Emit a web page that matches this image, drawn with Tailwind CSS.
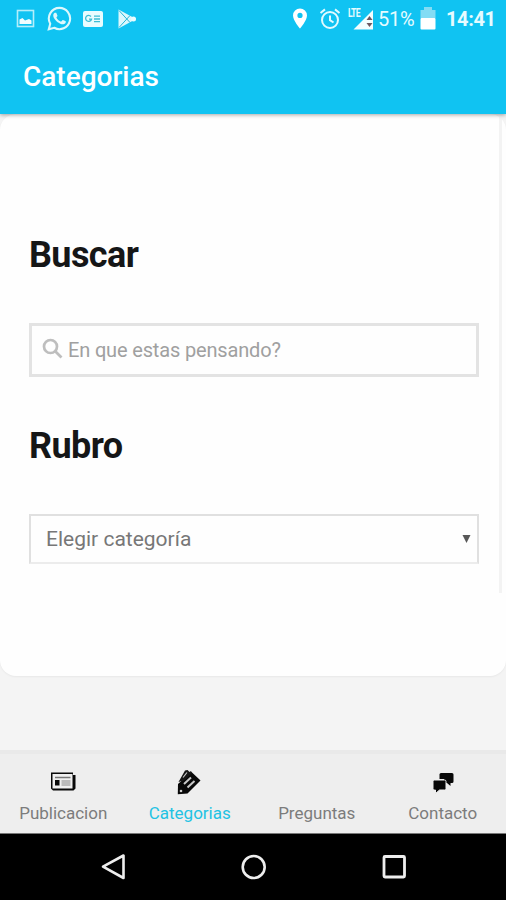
<!DOCTYPE html>
<html lang="es">
<head>
<meta charset="utf-8">
<title>Categorias</title>
<script src="https://cdn.jsdelivr.net/npm/@tailwindcss/browser@4"></script>
</head>
<body class="w-[506px] h-[900px] overflow-hidden bg-[#f4f4f4] font-['Roboto',sans-serif]">
<div class="flex flex-col h-[900px]">
  <header class="relative z-10 h-[114px] shrink-0 bg-[#10c3f2] text-white shadow-[0_1px_4px_rgba(0,0,0,0.35)]">
    <div class="flex h-[37px] items-center justify-between pl-[16px] pr-[11px] text-[#e6fbff]">
      <div class="flex items-center">
        <svg class="w-[19px] h-[19px]" viewBox="0 0 19 19"><rect x="1.500" y="1.500" width="16" height="16" fill="none" stroke="#b5eefa" stroke-width="1.600"/><path d="M3.500 10.500L6.500 9L9 11.500L13 10L15.500 11.500V15H3.500Z" fill="#f2fdff"/></svg>
        <svg class="ml-[12px] w-[25px] h-[25px]" viewBox="0 0 24 24" fill="#ddf8fd"><path d="M17.472 14.382c-.297-.149-1.758-.867-2.030-.967-.273-.099-.471-.148-.670.150-.197.297-.767.966-.940 1.164-.173.199-.347.223-.644.075-.297-.150-1.255-.463-2.390-1.475-.883-.788-1.480-1.761-1.653-2.059-.173-.297-.018-.458.130-.606.134-.133.298-.347.446-.520.149-.174.198-.298.298-.497.099-.198.050-.371-.025-.520-.075-.149-.669-1.612-.916-2.207-.242-.579-.487-.500-.669-.510-.173-.008-.371-.010-.570-.010-.198 0-.520.074-.792.372-.272.297-1.040 1.016-1.040 2.479 0 1.462 1.065 2.875 1.213 3.074.149.198 2.096 3.200 5.077 4.487.709.306 1.262.489 1.694.625.712.227 1.360.195 1.871.118.571-.085 1.758-.719 2.006-1.413.248-.694.248-1.289.173-1.413-.074-.124-.272-.198-.570-.347z"/><path d="M12 1.800a10.200 10.200 0 0 0-8.900 15.200L1.700 22.300L7 20.900A10.200 10.200 0 1 0 12 1.800Z" fill="none" stroke="#ddf8fd" stroke-width="2"/></svg>
        <svg class="ml-[10px] w-[22px] h-[18px]" viewBox="0 0 22 18"><rect x="1" y="1" width="20" height="16" rx="2" fill="#e9fcff"/><path d="M9 6.500A3 3 0 1 0 9.500 9.200H7M12 6.200h6M12 9h6M12 11.700h6" fill="none" stroke="#3dbcd4" stroke-width="1.300"/></svg>
        <svg class="ml-[13px] w-[21px] h-[20px]" viewBox="0 0 21 20"><path d="M1.500 .5L19 10L1.500 19.500Z" fill="#dcf8fd"/><path d="M2 1.500L13 13.500M2 18.500L13 6.500" stroke="#25b6d8" stroke-width="1"/><circle cx="16.500" cy="10" r="2.500" fill="#eafcff"/></svg>
      </div>
      <div class="flex items-center">
        <svg class="w-[16px] h-[21px]" viewBox="0 0 16 21"><path fill="#fff" fill-rule="evenodd" d="M8 .5A7 7 0 0 0 1 7.500C1 12.500 8 20.500 8 20.500S15 12.500 15 7.500A7 7 0 0 0 8 .500ZM8 4.800a2.600 2.600 0 1 1 0 5.200a2.600 2.600 0 0 1 0-5.200Z"/></svg>
        <svg class="ml-[11px] w-[22px] h-[22px]" viewBox="0 0 22 22" fill="none" stroke="#e2faff" stroke-width="2"><circle cx="11" cy="12" r="8"/><path d="M1.500 5L6 1.400M20.500 5L16 1.400M11 7.500V12.200L14.500 14.500"/></svg>
        <div class="relative ml-[7px] w-[26px] h-[22px]">
          <svg class="w-[26px] h-[22px]" viewBox="0 0 26 22"><path d="M25 2V21.500H5.500Z" fill="#f4feff"/><path d="M21.500 8L24.500 12H18.500ZM21.500 19L18.500 15H24.500Z" fill="#6e5962"/></svg>
          <span class="absolute left-0 top-0 text-[12px] leading-[11px] font-bold tracking-[-0.9px] scale-x-[0.72] origin-left">LTE</span>
        </div>
        <span class="ml-[4px] w-[37px] text-[20px] tracking-[-0.2px] leading-none whitespace-nowrap">51%</span>
        <svg class="ml-[4px] w-[18px] h-[24px] mb-[2px]" viewBox="0 0 18 24"><path d="M5 1H13V4H16.500V12H1.500V4H5Z" fill="#83dcf4"/><rect x="1.500" y="12" width="15" height="11.500" rx="1" fill="#fff"/></svg>
        <span class="ml-[9px] w-[49px] text-[20px] font-bold leading-none tracking-[-0.4px] whitespace-nowrap">14:41</span>
      </div>
    </div>
    <h1 class="mt-[23px] pl-[23px] text-[28px] font-medium leading-[34px]">Categorias</h1>
  </header>

  <div class="flex-1 bg-[#f4f4f4]">
    <main class="h-[562px] rounded-[16px] bg-[#fefefe] shadow-[0_1px_2px_rgba(0,0,0,0.05)]">
      <div class="h-[479px] w-[502px] border-r-[3px] border-[#f3f3f3] pl-[29px] pr-[20px] pt-[120px]">
        <h2 class="h-[42px] text-[36px] font-bold leading-[42px] tracking-[-0.6px] text-[#151617]">Buscar</h2>
        <div class="mt-[47px] flex h-[54px] w-[450px] items-center border-[3px] border-[#e3e3e3] pl-[10px]">
          <svg class="w-[21px] h-[21px] mb-[3px]" viewBox="0 0 21 21" fill="none" stroke="#bebebe" stroke-width="2.700"><circle cx="8.500" cy="8.500" r="6.500"/><path d="M13.200 13.200L19.500 19.500"/></svg>
          <span class="ml-[5px] text-[20px] leading-none tracking-[-0.16px] text-[#a0a0a0]">En que estas pensando?</span>
        </div>
        <h2 class="mt-[48px] h-[42px] text-[36px] font-bold leading-[42px] tracking-[-0.6px] text-[#151617]">Rubro</h2>
        <div class="mt-[47px] flex h-[50px] w-[450px] items-center justify-between border-2 border-[#e0e0e0] border-b-[#ececec] pl-[15px] pr-[6px]">
          <span class="text-[21px] leading-none text-[#777]">Elegir categoría</span>
          <svg class="w-[9px] h-[9px]" viewBox="0 0 9 9"><path d="M.5 0H8.500L4.500 8Z" fill="#585858"/></svg>
        </div>
      </div>
    </main>
  </div>

  <nav class="grid h-[83px] shrink-0 grid-cols-4 border-t-4 border-[#e9e9e9] bg-[#eee] text-[17px] text-[#7c7c7c]">
    <div class="flex flex-col items-center pt-[15px]">
      <svg class="h-[26px] w-[26px]" viewBox="0 0 26 26"><path d="M23 3.500V6H25.500V19.500L23.500 21.500H3L1 19.500V3.500Z" fill="#090909"/><rect x="2.500" y="5" width="20" height="14.500" fill="#f0f0f0"/><path d="M5 8.500H20.500" stroke="#777" stroke-width="1.500"/><rect x="5" y="11" width="4.500" height="5.500" fill="#0a0a0a"/><path d="M11.500 12H20.500M11.500 14H20.500M11.500 16H20.500" stroke="#aaa" stroke-width="1.300"/></svg>
      <span class="mt-[8px] leading-[20px]">Publicacion</span>
    </div>
    <div class="flex flex-col items-center pt-[15px]">
      <svg class="h-[26px] w-[26px]" viewBox="0 0 26 26"><path d="M1 15L14.500 3L23.500 11.500L10.500 24.500L.8 25.200Z" fill="#080808"/><path d="M1.500 13L8 1.500L10.500 1L12.500 3L14 2L15 4L8 11Z" fill="#151515"/><path d="M6 8.500L10 3.500" stroke="#ccc" stroke-width="1.200"/><path d="M7 15L14 8.500M10.500 18.500L17.500 12" stroke="#c8c8c8" stroke-width="2"/><circle cx="4" cy="22" r="1.300" fill="#ccc"/></svg>
      <span class="mt-[8px] leading-[20px] text-[#22c2e3]">Categorias</span>
    </div>
    <div class="flex flex-col items-center pt-[15px] pl-[1px]">
      <span class="h-[26px]"></span>
      <span class="mt-[8px] leading-[20px]">Preguntas</span>
    </div>
    <div class="flex flex-col items-center pt-[15px]">
      <svg class="h-[26px] w-[26px]" viewBox="0 0 26 26" fill="#080808"><path d="M11 4H22Q23.500 4 23.500 5.500V12.500Q23.500 14 22 14H20.500V17L17 14H14V5.500Z"/><path d="M9.500 10V5.500Q9.500 4 11 4H17V10Z"/><path d="M4.500 11H14.500Q16 11 16 12.500V19.500Q16 21 14.500 21H9.500L5.500 24.500V21H4.500Q3 21 3 19.500V12.500Q3 11 4.500 11Z" stroke="#eee" stroke-width="1"/></svg>
      <span class="mt-[8px] leading-[20px]">Contacto</span>
    </div>
  </nav>

  <div class="h-[67px] shrink-0 border-t border-[#777] bg-black flex items-center justify-center pl-[1px]">
    <svg class="h-[30px] w-[30px]" viewBox="0 0 30 30" fill="none" stroke="#eee" stroke-width="2.600" stroke-linejoin="round"><path d="M25.500 3.500V26L5 14.700Z"/></svg>
    <svg class="ml-[111px] h-[30px] w-[30px]" viewBox="0 0 30 30" fill="none" stroke="#eee" stroke-width="2.600"><circle cx="14.700" cy="15" r="11"/></svg>
    <svg class="ml-[111px] h-[30px] w-[30px]" viewBox="0 0 30 30" fill="none" stroke="#eee" stroke-width="2.800"><rect x="4" y="4.500" width="20.500" height="20.500" rx="1"/></svg>
  </div>
</div>
</body>
</html>
